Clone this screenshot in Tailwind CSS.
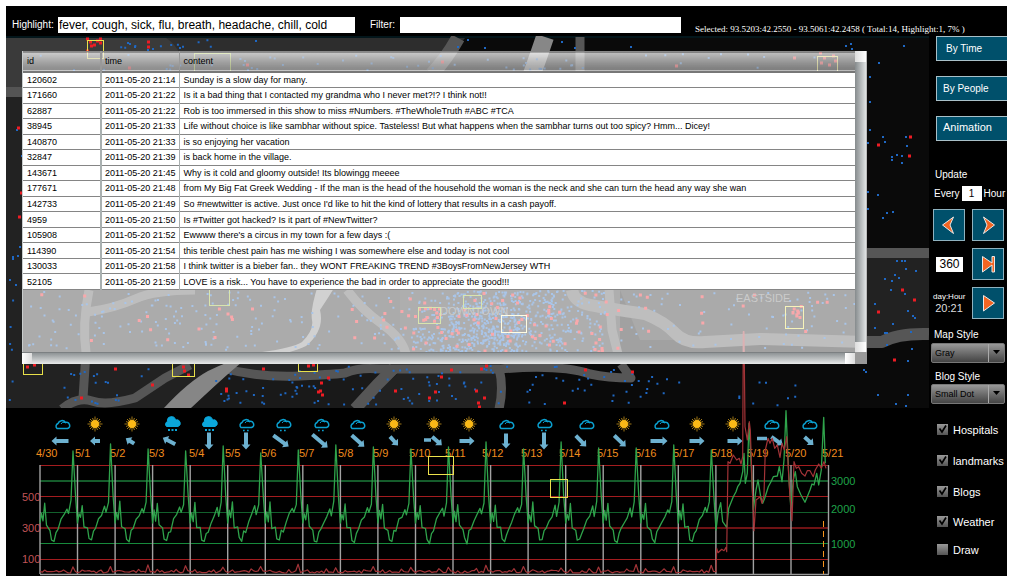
<!DOCTYPE html>
<html lang="en">
<head>
<meta charset="utf-8">
<title>Microblog map explorer</title>
<script src="https://cdn.jsdelivr.net/npm/@tailwindcss/browser@4"></script>
</head>
<body class="bg-white pt-[6px] pl-[6px] pr-[7px] pb-[6px] font-['Liberation_Sans',sans-serif]">
<main class="bg-black text-white">
  <header class="flex h-[30px] items-center">
    <label for="highlight" class="w-[52px] shrink-0 pl-[6px] pt-2 text-[10px] leading-3 whitespace-nowrap">Highlight:</label>
    <input id="highlight" value="fever, cough, sick, flu, breath, headache, chill, cold" class="mt-[7px] h-4 w-[297px] shrink-0 bg-white px-px text-xs text-black outline-none">
    <label for="filter" class="w-[45px] shrink-0 pt-2 pl-[15px] text-[10px] leading-3">Filter:</label>
    <input id="filter" class="mt-[7px] h-4 w-[281px] shrink-0 bg-white px-px text-xs text-black outline-none">
    <p class="ml-[14px] pt-[15px] font-['Liberation_Serif',serif] text-[9px] leading-3 whitespace-nowrap">Selected: 93.5203:42.2550 - 93.5061:42.2458 ( Total:14, Highlight:1, 7% )</p>
  </header>
  <div class="flex">
    <div class="min-w-0 flex-1">
      <section class="relative" aria-label="Map">
        <svg class="block h-auto w-full" viewBox="6 36 923 372">
          <rect x="6" y="36" width="923" height="372" fill="#0a0a0a"/>
          <rect x="6" y="36" width="923" height="2" fill="#03161b"/>
          <path d="M6 38H465L440 72H6Z" fill="#2d2d2d"/>
          <path d="M6 38H166Q176 44 180 55V92H6Z" fill="#3a3a3a"/>
          <path d="M6 97H500V408H6Z" fill="#222"/>
          <path d="M230 372H400L358 408H190Z" fill="#191919"/>
          <path d="M400 290H620V360H400Z" fill="#2c2c2c"/>
          <path d="M850 256H929V340H760V290Z" fill="#222"/>
          <path d="M620 290H850V340H640Z" fill="#202020"/>
          <path d="M6 92H30" stroke="#545454" stroke-width="10"/>
          <g fill="none" stroke="#565656" stroke-width="9" stroke-linejoin="round">
            <path d="M89 290Q82 325 86 352L83 398" stroke-width="9"/>
            <path d="M88 312Q115 308 135 299T195 290"/>
            <path d="M62 409Q78 396 92 401T135 398L165 378L190 365"/>
            <path d="M222 368Q260 378 300 376T345 373Q360 367 380 369H500Q560 364 590 374Q608 378 631 378L621 364"/>
            <path d="M355 409L377 385L394 368" stroke-width="12"/>
            <path d="M499 368Q504 388 499 409"/>
            <path d="M347 290Q362 310 382 324T406 354"/>
            <path d="M609 290L612 330L618 354"/>
            <path d="M572 290Q574 302 590 305T645 314Q665 322 675 333T705 342L760 339L867 342H882Q898 333 929 334" stroke-width="12"/>
            <path d="M458 38Q447 58 432 74" stroke-width="14"/>
            <path d="M580 37V74"/>
            <path d="M850 253H929" stroke-width="10"/>
          </g>
          <path d="M545 37Q539 55 532 74" fill="none" stroke="#878787" stroke-width="18"/>
          <path d="M318 285Q310 310 312 320T302 342Q292 348 262 352Q230 360 208 371Q188 382 164 408H191Q206 394 218 383T242 362Q290 354 306 346Q325 330 320 310Q328 298 336 285Z" fill="#868686"/>
          <g id="dots"></g>
          <g fill="#777" font-size="11" font-family="Liberation Sans">
            <text x="440" y="315">DOWNTOWN</text><text x="736" y="302">EASTSIDE</text>
          </g>
          <g fill="none" stroke="#e8e04a">
            <rect x="87.500" y="40.500" width="16" height="18"/><rect x="23.500" y="352.500" width="19" height="22"/>
            <rect x="172.500" y="360.500" width="22" height="16"/><rect x="298.500" y="360.500" width="19" height="11"/>
            <rect x="817.500" y="56.500" width="20" height="20"/><rect x="785.500" y="306.500" width="18" height="22"/>
            <rect x="501.500" y="315.500" width="25" height="17" stroke="#fff8b0"/>
          </g>
          <g fill="none" stroke="#9cbb2c">
            <rect x="194.500" y="53.500" width="36" height="22"/><rect x="418.500" y="307.500" width="22" height="16"/>
            <rect x="463.500" y="295.500" width="18" height="13"/><rect x="209.500" y="288.500" width="20" height="17"/>
          </g>
        </svg>
        <section aria-label="Posts" class="absolute top-[15px] left-4 z-10 grid w-[calc(100%-78px)] grid-cols-[1fr_12px] grid-rows-[301px_12px]">
          <div class="border-l border-[#c8cccc] bg-white/62">
            <table class="h-[239px] w-full table-fixed border-collapse text-left text-[9px] leading-3 text-black">
              <colgroup><col class="w-[78px]"><col class="w-[78px]"><col></colgroup>
              <thead><tr class="h-5 border-t border-b-2 border-t-[#888] border-b-[#777] bg-linear-to-b from-white/30 to-black/20">
                <th class="border-r-2 border-[#999] pl-1 font-normal">id</th><th class="border-r border-[#999] pl-[3px] font-normal">time</th><th class="pl-1 font-normal">content</th>
              </tr></thead>
              <tbody id="rows"></tbody>
            </table>
          </div>
          <div class="flex flex-col justify-between border-r border-[#bbb] bg-linear-to-r from-[#868b8d] to-[#e0e3e4]"><i class="h-[11px] bg-linear-to-r from-[#ddd] to-white"></i><i class="h-[10px] bg-linear-to-r from-[#ddd] to-white"></i></div>
          <div class="flex justify-between border-t border-[#7c8082] bg-linear-to-b from-[#8e9395] to-[#e8eaea]"><i class="w-[10px] bg-linear-to-r from-white to-[#ddd]"></i><i class="w-[10px] bg-linear-to-r from-white to-[#ddd]"></i></div>
          <div class="bg-[#999]"></div>
        </section>
      </section>
      <section aria-label="Timeline">
        <svg class="relative block h-auto w-full overflow-visible" viewBox="6 408 923 168">
          <defs>
            <g id="cloud"><path d="M-5 4.500A3 3 0 0 1 -4 -.500A4.200 4.200 0 0 1 3.500 -1.500A3 3 0 0 1 5.500 4.500Z" fill="none" stroke="#0aa0d0" stroke-width="1.500"/><path d="M-1 0A3 3 0 0 1 3 -1.500" fill="none" stroke="#0aa0d0"/></g>
            <g id="rain"><use href="#cloud" y="-1"/><path d="M-3 6.500h1.700M1 6.500h1.700" stroke="#0aa0d0" stroke-width="1.600"/></g>
            <g id="snow"><path d="M-5.500 2.500A3 3 0 0 1 -4.500 -2.500A4 4 0 0 1 3.500 -4A3.300 3.300 0 0 1 6 2.500Z" fill="#0ba7db" stroke="#0ba7db"/><path d="M-4 6h2M-.500 6h2M3 6h2" stroke="#0ba7db" stroke-width="2"/></g>
            <g id="sun"><path d="M0-7.500V7.500M-7.500 0H7.500M-5-5L5 5M5-5L-5 5M-2.500-6L2.500 6M2.500-6L-2.500 6M-6-2.500L6 2.500M-6 2.500L6-2.500" stroke="#c8961c" stroke-width=".8"/><circle r="4" fill="#fbb917"/></g>
          </defs>
          <g stroke-width="1.200">
            <path stroke="#a41c1f" d="M40 465.500H829M40 496.500H829M40 559.500H829"/><path stroke="#6e1214" stroke-width="1.800" d="M40 528H829"/>
            <path stroke="#155c2b" stroke-width="1.800" d="M40 481H829"/><path stroke="#12602c" d="M40 512.500H829"/><path stroke="#178a3c" d="M40 543.500H829"/>
          </g>
          <g id="days" stroke="#a2a2a2" stroke-width="1.400"></g>
          <path d="M40 574.500H829" stroke="#999" stroke-width="1.500"/>
          <g id="dates" fill="#f08c1e" font-size="11" font-family="Liberation Sans"></g>
          <g fill="#c25457" font-size="11" font-family="Liberation Sans"><text x="22" y="501">500</text><text x="22" y="532">300</text><text x="22" y="563">100</text></g>
          <g fill="#1fa34a" font-size="11" font-family="Liberation Sans"><text x="831" y="485">3000</text><text x="831" y="513">2000</text><text x="831" y="548">1000</text></g>
          <g id="weather"></g>
          <path id="all" fill="none" stroke="#2fa34b" stroke-width="1.300" stroke-linejoin="round"/>
          <path id="hits" fill="none" stroke="#a23337" stroke-width="1.200" stroke-linejoin="round"/>
          <path d="M823.500 521V574" stroke="#f7941d" stroke-dasharray="6 4"/>
          <g fill="none" stroke="#ede24c"><rect x="428.500" y="456.500" width="25" height="18"/><rect x="550.500" y="479.500" width="17" height="18"/></g>
        </svg>
      </section>
    </div>
    <aside class="flex w-[78px] shrink-0 flex-col text-[10px] leading-3">
      <nav class="flex flex-col gap-[15px] pl-[7px]">
        <button class="h-[25px] border-y border-l border-[#a9c0c8] bg-[#00506b] pl-[9px] text-left text-[10px]">By Time</button>
        <button class="h-[25px] border-y border-l border-[#a9c0c8] bg-[#00506b] pl-[6px] text-left text-[10px] whitespace-nowrap">By People</button>
        <button class="h-[25px] border-y border-l border-[#a9c0c8] bg-[#00506b] pb-1 pl-[6px] text-left text-[11px] whitespace-nowrap">Animation</button>
      </nav>
      <p class="mt-[28px] pl-[6px]">Update</p>
      <div class="mt-[5px] flex h-[15px] items-center gap-[2px] pl-[5px]">
        <label for="step">Every</label><input id="step" value="1" class="h-[15px] w-5 shrink-0 bg-white text-center text-black outline-none"><span>Hour</span>
      </div>
      <div class="mt-[8px] grid grid-cols-[32px_32px] grid-rows-[32px_32px_32px] items-center gap-x-[7px] gap-y-[7px] pl-1">
        <button aria-label="Previous" class="size-8 border border-[#8fb2bf] bg-[#00506b]"><svg viewBox="0 0 30 30"><path d="M8.500 15L19.500 7L16 15L19.500 23.500Z" fill="#f26522" stroke="#e8e8e8"/></svg></button>
        <button aria-label="Next" class="size-8 border border-[#8fb2bf] bg-[#00506b]"><svg viewBox="0 0 30 30"><path d="M21.500 15L10.500 7L14 15L10.500 23.500Z" fill="#f26522" stroke="#e8e8e8"/></svg></button>
        <input aria-label="Step count" value="360" class="ml-[3px] h-[15px] w-[27px] bg-white text-center text-xs text-black outline-none">
        <button aria-label="Skip to end" class="size-8 border border-[#8fb2bf] bg-[#00506b]"><svg viewBox="0 0 30 30"><path d="M9.500 7.500L19 14V7.500H21.500V23H19V16L9.500 23Z" fill="#f26522" stroke="#e8e8e8"/></svg></button>
        <p class="text-center whitespace-nowrap"><span class="block text-[8px] leading-[10px]">day:Hour</span><span class="block text-[11px] leading-3 text-[#ddd]">20:21</span></p>
        <button aria-label="Play" class="size-8 border border-[#8fb2bf] bg-[#00506b]"><svg viewBox="0 0 30 30"><path d="M10.500 7.500L21.500 15L10.500 23Z" fill="#f26522" stroke="#e8e8e8"/></svg></button>
      </div>
      <label for="mapstyle" class="mt-[10px] pl-[5px]">Map Style</label>
      <div class="mt-[2px] ml-[2px] grid h-5 w-[74px]">
        <select id="mapstyle" class="col-start-1 row-start-1 appearance-none rounded-xs border border-[#777] bg-linear-to-b from-[#999] to-[#444] pl-[3px] text-[9px] leading-3 text-black"><option>Gray</option></select>
        <svg class="pointer-events-none col-start-1 row-start-1 h-5 w-[17px] justify-self-end" viewBox="0 0 17 20"><path d="M.500 1V19" stroke="#aaa"/><path d="M5 7H12L8.500 11Z" fill="#000"/></svg>
      </div>
      <label for="blogstyle" class="mt-[8px] pl-[6px]">Blog Style</label>
      <div class="mt-px ml-[2px] grid h-5 w-[74px]">
        <select id="blogstyle" class="col-start-1 row-start-1 appearance-none rounded-xs border border-[#777] bg-linear-to-b from-[#999] to-[#444] pl-[3px] text-[9px] leading-3 text-black"><option>Small Dot</option></select>
        <svg class="pointer-events-none col-start-1 row-start-1 h-5 w-[17px] justify-self-end" viewBox="0 0 17 20"><path d="M.500 1V19" stroke="#aaa"/><path d="M5 7H12L8.500 11Z" fill="#000"/></svg>
      </div>
      <div class="mt-5 flex flex-col gap-[19px] pl-2 text-[11px]">
        <label class="grid grid-cols-[11px_1fr] gap-x-[5px]"><input type="checkbox" checked class="peer col-start-1 row-start-1 size-[11px] appearance-none bg-linear-to-b from-[#999] to-[#555]"><svg class="invisible col-start-1 row-start-1 size-[11px] peer-checked:visible" viewBox="0 0 11 11"><path d="M2.500 4.500L5 8L9 1.500" fill="none" stroke="#000" stroke-width="1.700"/></svg>Hospitals</label>
        <label class="grid grid-cols-[11px_1fr] gap-x-[5px]"><input type="checkbox" checked class="peer col-start-1 row-start-1 size-[11px] appearance-none bg-linear-to-b from-[#999] to-[#555]"><svg class="invisible col-start-1 row-start-1 size-[11px] peer-checked:visible" viewBox="0 0 11 11"><path d="M2.500 4.500L5 8L9 1.500" fill="none" stroke="#000" stroke-width="1.700"/></svg>landmarks</label>
        <label class="grid grid-cols-[11px_1fr] gap-x-[5px]"><input type="checkbox" checked class="peer col-start-1 row-start-1 size-[11px] appearance-none bg-linear-to-b from-[#999] to-[#555]"><svg class="invisible col-start-1 row-start-1 size-[11px] peer-checked:visible" viewBox="0 0 11 11"><path d="M2.500 4.500L5 8L9 1.500" fill="none" stroke="#000" stroke-width="1.700"/></svg>Blogs</label>
        <label class="-mt-px grid grid-cols-[11px_1fr] gap-x-[5px]"><input type="checkbox" checked class="peer col-start-1 row-start-1 size-[11px] appearance-none bg-linear-to-b from-[#999] to-[#555]"><svg class="invisible col-start-1 row-start-1 size-[11px] peer-checked:visible" viewBox="0 0 11 11"><path d="M2.500 4.500L5 8L9 1.500" fill="none" stroke="#000" stroke-width="1.700"/></svg>Weather</label>
        <label class="-mt-[3px] grid grid-cols-[11px_1fr] gap-x-[5px]"><input type="checkbox" class="peer col-start-1 row-start-1 size-[11px] appearance-none bg-linear-to-b from-[#999] to-[#555]"><svg class="invisible col-start-1 row-start-1 size-[11px] peer-checked:visible" viewBox="0 0 11 11"><path d="M2.500 4.500L5 8L9 1.500" fill="none" stroke="#000" stroke-width="1.700"/></svg>Draw</label>
      </div>
    </aside>
  </div>
</main>
<script>
const posts = [
 ['120602','21:14','Sunday is a slow day for many.'],
 ['171660','21:22','Is it a bad thing that I contacted my grandma who I never met?!? I think not!!'],
 ['62887','21:22','Rob is too immersed in this show to miss #Numbers. #TheWholeTruth #ABC #TCA'],
 ['38945','21:33','Life without choice is like sambhar without spice. Tasteless! But what happens when the sambhar turns out too spicy? Hmm... Dicey!'],
 ['140870','21:33','is so enjoying her vacation'],
 ['32847','21:39','is back home in the village.'],
 ['143671','21:45','Why is it cold and gloomy outside! Its blowingg meeee'],
 ['177671','21:48','from My Big Fat Greek Wedding - If the man is the head of the household  the woman is the neck and she can turn the head any way she wan'],
 ['142733','21:49',"So #newtwitter is active. Just once I'd like to hit the kind of lottery that results in a cash payoff."],
 ['4959','21:50','Is #Twitter got hacked? Is it part of #NewTwitter?'],
 ['105908','21:52',"Ewwww there's a circus in my town for a few days :("],
 ['114390','21:54','this terible chest pain has me wishing I was somewhere else and today is not cool'],
 ['130033','21:58','I think twitter is a bieber fan.. they WONT FREAKING TREND #3BoysFromNewJersey WTH'],
 ['52105','21:59','LOVE is a risk... You have to experience the bad in order to appreciate the good!!!']];
document.getElementById('rows').innerHTML = posts.map(p =>
 `<tr class="border-b border-[#858585] bg-white"><td class="border-r-2 border-[#a9b0b0] pl-1">${p[0]}</td><td class="border-r border-[#a9b0b0] pl-[3px] whitespace-nowrap">2011-05-20 ${p[1]}</td><td class="pl-1 whitespace-nowrap">${p[2]}</td></tr>`).join('');

// Posts on the map: blue for all, red for highlighted.
let seed = 7; const rnd = () => (seed = (seed * 16807) % 2147483647) / 2147483647;
let blue = '', red = '';
const B = (x, y) => blue += `M${x.toFixed(1)} ${y.toFixed(1)}h2`, R = (x, y) => red += `M${x.toFixed(1)} ${y.toFixed(1)}h3`;
const fill = (f, n, x, y, w, h) => { for (let i = 0; i < n; i++) f(x + rnd() * w, y + rnd() * h); };
const bell = (f, n, x, y, w, h) => { for (let i = 0; i < n; i++) { const py = y + (rnd() + rnd() - 1) * h; if (py > 291 && py < 353) f(x + (rnd() + rnd() + rnd() - 1.5) * w, py); } };
fill(B, 90, 28, 292, 200, 58); fill(B, 40, 228, 292, 110, 58); fill(B, 25, 340, 292, 60, 58); fill(B, 70, 620, 292, 235, 58);
bell(B, 480, 490, 322, 70, 50); fill(B, 150, 410, 328, 110, 24); fill(B, 110, 450, 291, 110, 30); fill(B, 90, 545, 291, 60, 60);
fill(R, 14, 35, 292, 230, 52); fill(R, 12, 350, 292, 60, 52); fill(R, 70, 410, 292, 210, 60); fill(R, 12, 625, 292, 210, 40);
fill(R, 10, 420, 308, 20, 14); fill(R, 10, 787, 306, 14, 12);
fill(B, 20, 55, 367, 110, 38); fill(B, 42, 215, 370, 125, 35); fill(B, 50, 340, 366, 160, 40); fill(B, 25, 505, 366, 120, 38); fill(B, 14, 625, 370, 55, 38); fill(B, 9, 738, 370, 60, 36);
fill(B, 30, 30, 54, 400, 16); fill(B, 30, 400, 54, 450, 16); fill(B, 10, 120, 40, 90, 10); fill(B, 6, 8, 290, 14, 110);
const bl = [[16,130],[21,156],[17,256],[12,257],[15,285],[9,280],[19,247],[12,259],[127,43],[134,47],[129,44],[147,50],[152,49],[179,48],[255,41],[467,40],[457,47],[484,48],[561,42],[574,48],[630,47],[845,46],[850,44],[851,49],[903,46],[878,63],[869,77],[869,102],[869,130],[882,137],[905,137],[884,142],[906,146],[867,143],[867,192],[891,157],[896,155],[901,156],[891,160],[901,163],[877,195],[867,209],[882,218],[886,213],[892,212],[896,261],[901,261],[904,261],[905,269],[915,271],[884,279],[891,281],[894,275],[898,278],[890,290],[904,294],[907,311],[874,304],[912,316],[914,318],[892,324],[874,328],[884,333],[886,333],[910,332],[886,345],[911,349],[907,361],[863,370],[865,372],[877,395],[895,404],[907,395],[905,406]];
bl.forEach(p => B(p[0], p[1]));
const rd = [[86,39],[89,42],[93,45],[96,41],[99,39],[99,43],[90,46],[86,51],[147,42],[147,47],[17,128],[18,217],[20,193],[909,137],[877,145],[908,156],[901,290],[913,300],[877,312],[893,360],[26,367],[33,365],[22,361],[114,369],[182,367],[183,371],[187,375],[151,385],[80,398],[225,389],[225,391],[262,369],[307,366],[312,365],[327,378],[319,391],[321,395],[317,392],[320,383],[450,370],[440,377],[394,391],[434,392],[428,398],[475,391],[483,398],[477,403],[478,407],[584,370],[631,372],[563,403],[480,369],[485,366],[819,53],[823,58],[828,65],[832,56],[834,61],[820,63],[793,58],[441,62],[675,66],[128,68],[246,65]];
rd.forEach(p => R(p[0], p[1]));
document.getElementById('dots').innerHTML = `<path d="${blue}" stroke="#1f68c4" stroke-width="2"/><path d="${red}" stroke="#ee1c24" stroke-width="3"/>`;

// Timeline
const X0 = 40, STEP = 788.5 / 21;
let g = ''; for (let i = 0; i <= 21; i++) { const x = (X0 + i * STEP).toFixed(1); g += `<path d="M${x} 465V574"/>`; }
document.getElementById('days').innerHTML = g;
const dx = [36,75,110,149,189,225,261,299,338,373,409,445,482,521,559,597,635,673,711,747,785,822];
document.getElementById('dates').innerHTML = dx.map((x, i) => `<text x="${x}" y="457">${i ? '5/' + i : '4/30'}</text>`).join('');
const peaks = [451,444,449,451,446,453,450,445,447,449,447,442,449,442,448,448,445,450];
const shape = [[0,523],[1.5,512],[3,519],[4.700,503],[6.500,526],[10,528],[11.500,539],[14,541],[16,532],[18,530],[21,520],[24,515],[27,507],[28.500,514],[31,502]];
let a = 'M';
peaks.forEach((p, i) => { const x = X0 + i * STEP;
 shape.forEach((s, j) => a += `${(x + s[0]).toFixed(1)} ${(s[1] + (j && j < 15 ? rnd() * 5 - 2 : 0)).toFixed(1)}L`);
 a += `${x + 33} ${p}L${x + 35.5} 495L`; });
const late = [[78,570],[84,520],[92,488],[98,545],[110,562],[116,505],[130,470],[138,455],[143,440],[150,430],[158,395],[162,340],[166,430],[172,400],[177,250],[184,380],[190,510],[198,450],[204,420],[212,470],[218,490],[224,475],[235,440],[243,425],[250,410],[262,408],[268,380],[276,425],[282,360],[288,212],[296,400],[302,500],[310,420],[316,395],[322,440],[333,465],[345,487],[360,450],[366,432],[372,435],[380,400],[386,435],[394,390],[401,232],[406,370]];
a += late.map(p => `${(690 + p[0] / 3).toFixed(1)} ${(340 + p[1] / 3).toFixed(1)}`).join('L');
document.getElementById('all').setAttribute('d', a);
let h = 'M';
for (let i = 0; i < 18; i++) for (let k = 0; k < 16; k++) { const y = k == 14 ? 564 + rnd() * 4 : 570.5 + rnd() * 2.5 - (k == 2 || k == 10 ? 2 : 0); h += `${(X0 + (i + k / 16) * STEP).toFixed(1)} ${y.toFixed(1)}L`; }
const surge = [[78,695],[80,625],[84,638],[95,628],[102,632],[108,622],[110,635],[114,365],[120,370],[130,345],[140,360],[148,355],[153,372],[158,350],[160,-25],[162,-25],[165,260],[172,300],[178,245],[181,270],[186,420],[192,572],[198,480],[205,475],[210,470],[216,490],[222,465],[226,330],[234,295],[240,310],[247,295],[254,325],[262,315],[270,352],[276,310],[283,330],[290,290],[298,440],[306,542],[312,365],[319,385],[326,380],[335,400],[345,408],[352,392],[360,392],[370,410],[376,390],[386,372],[394,385],[402,365],[408,385]];
h += surge.map(p => `${(690 + p[0] / 3).toFixed(1)} ${(340 + p[1] / 3).toFixed(1)}`).join('L');
document.getElementById('hits').setAttribute('d', h);
// [x, icon, wind x, angle, length]
const W = [[62,'cloud',60,180,17],[95,'sun',95,180,10],[132,'sun',130,212,10],[172,'snow',169,207,14],[209,'snow',209,90,17],[246,'rain',246,90,17],[283,'rain',281,36,19],[321,'rain',320,40,20],[357,'cloud',358,42,17],[394,'sun',394,48,12],[434,'sun',437,42,13],[469,'sun',467,0,15],[506,'cloud',506,90,15],[544,'rain',544,90,17],[586,'cloud',581,46,15],[624,'sun',620,44,16],[661,'cloud',659,0,17],[697,'sun',697,0,15],[733,'sun',735,0,15],[771,'cloud',777,36,14],[809,'cloud',809,42,12]];
document.getElementById('weather').innerHTML = W.map(w => { const l = w[4] / 2;
 return `<use href="#${w[1]}" x="${w[0]}" y="424"/><path transform="translate(${w[2]} 441) rotate(${w[3]})" d="M${-l} -2H${l - 5}V-4.500L${l} 0L${l - 5} 4.500V2H${-l}Z" fill="#6db1d0"/>`; }).join('')
 + '<path d="M424 440h7M757 438.500h10" stroke="#6db1d0" stroke-width="3.500"/>';
</script>
</body>
</html>
